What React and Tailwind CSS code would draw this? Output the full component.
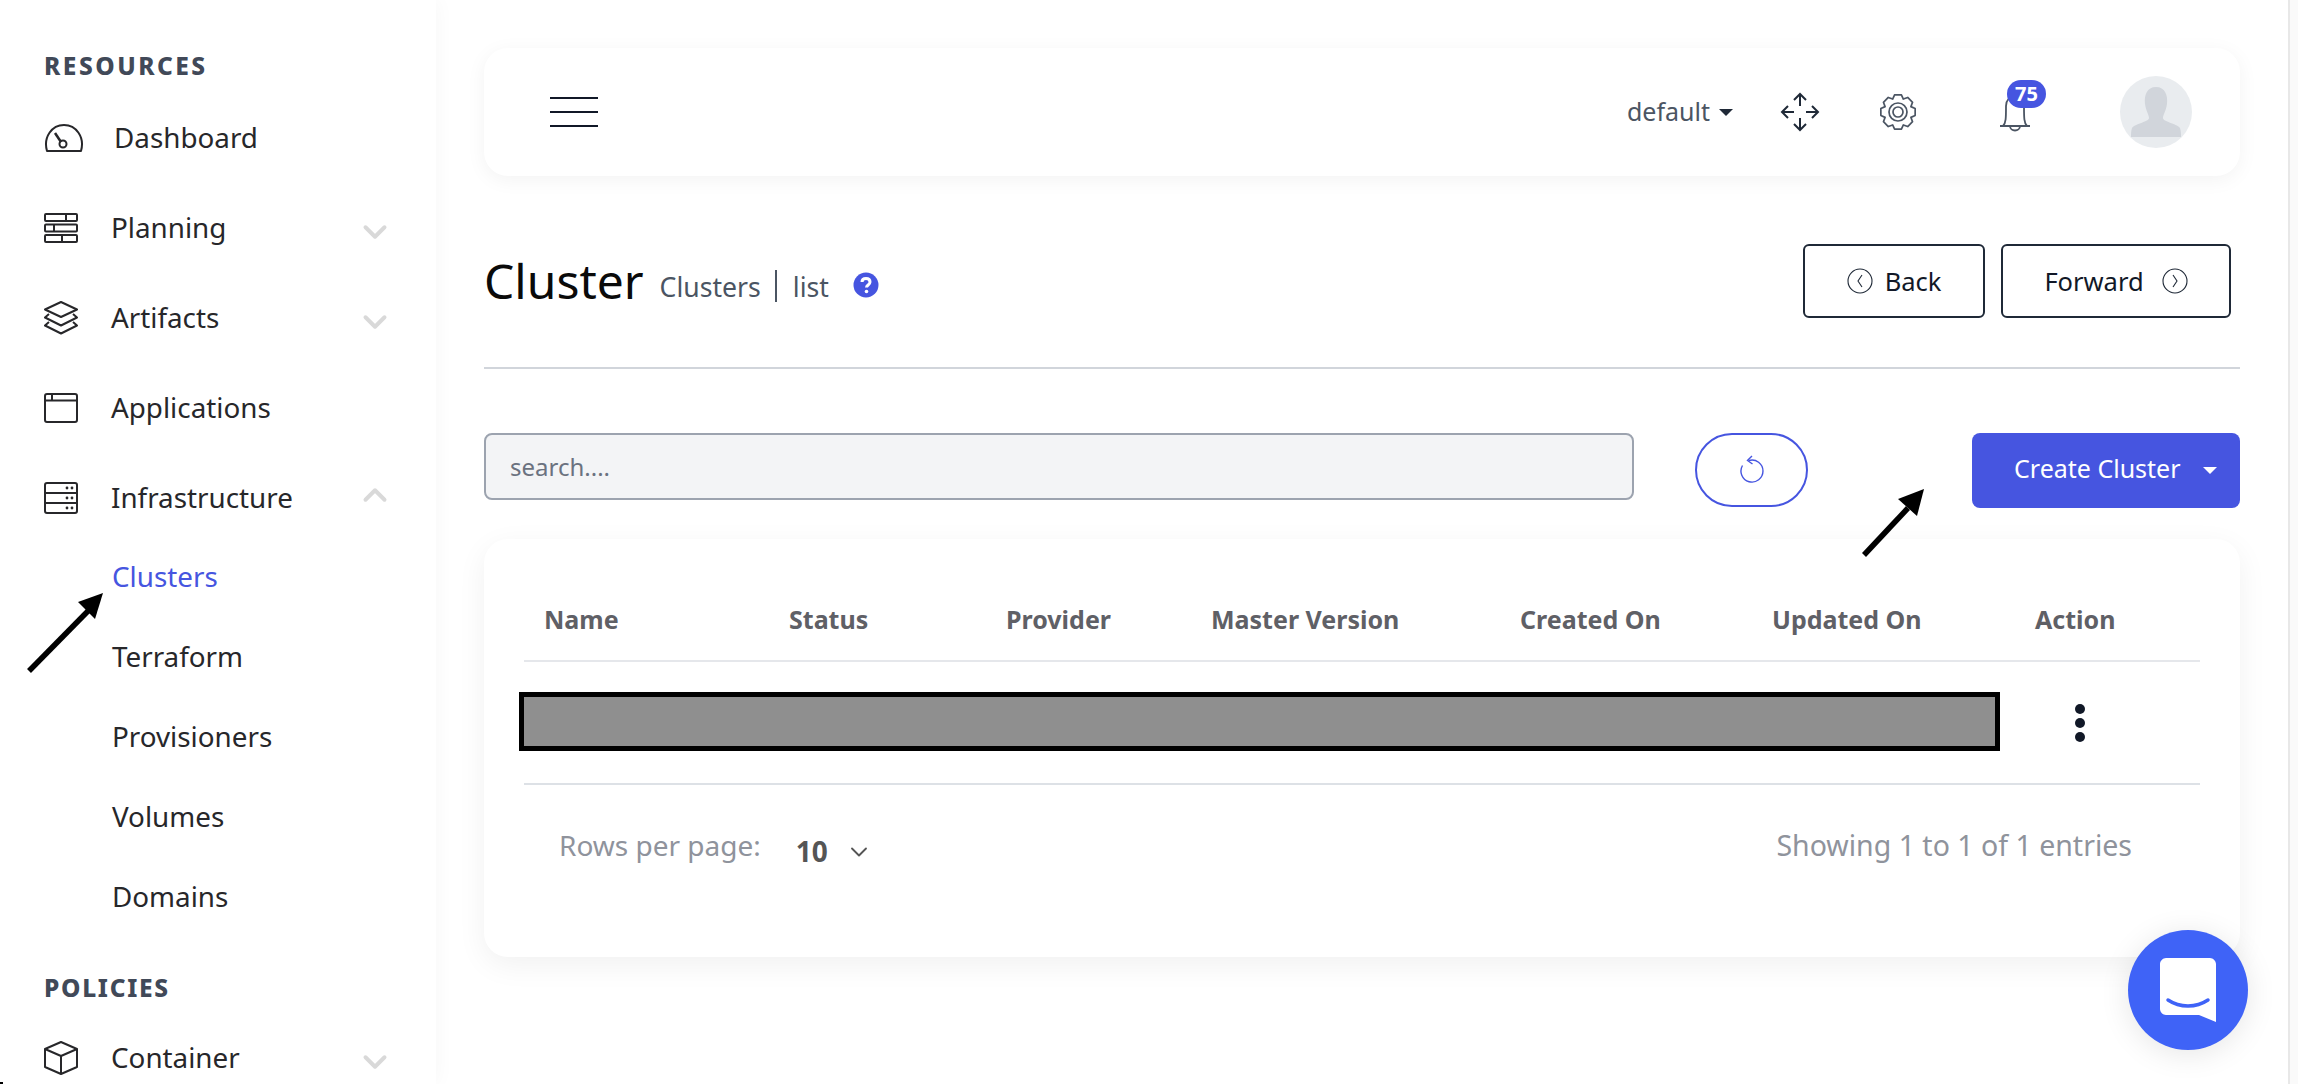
import { ChevronDown, ChevronUp } from "lucide-react";

const font = { fontFamily: '"Noto Sans", sans-serif' };

const Gauge = () => (
  <svg width="40" height="30" viewBox="0 0 40 30" fill="none" stroke="#27272a" strokeWidth="2">
    <path d="M3 28 C-1 14 8 2 20 2 C32 2 41 14 37 28 Z" strokeLinejoin="round" />
    <path d="M11 10 L17 19" strokeWidth="2.5" />
    <circle cx="19" cy="21" r="3.5" />
  </svg>
);

const Bricks = () => (
  <svg width="34" height="30" viewBox="0 0 34 30" fill="none" stroke="#27272a" strokeWidth="2">
    <rect x="1" y="1" width="32" height="7" rx="1" />
    <rect x="1" y="11.5" width="32" height="7" rx="1" />
    <rect x="1" y="22" width="32" height="7" rx="1" />
    <path d="M22 1V8M10 11.5V18.5M18 22V29" />
  </svg>
);

const Layers = () => (
  <svg width="34" height="34" viewBox="0 0 34 34" fill="none" stroke="#27272a" strokeWidth="2" strokeLinejoin="round">
    <path d="M17 1 L33 8.5 L17 16 L1 8.5 Z" />
    <path d="M5 13 L1 16.5 L17 24.5 L33 16.5 L29 13" />
    <path d="M5 21 L1 24.5 L17 32.5 L33 24.5 L29 21" />
  </svg>
);

const Browser = () => (
  <svg width="34" height="30" viewBox="0 0 34 30" fill="none" stroke="#27272a" strokeWidth="2">
    <rect x="1" y="1" width="32" height="28" rx="2" />
    <path d="M1 7.5H33M8 1V7.5" />
  </svg>
);

const Server = () => (
  <svg width="34" height="32" viewBox="0 0 34 32" fill="none" stroke="#27272a" strokeWidth="2">
    <rect x="1" y="1" width="32" height="30" rx="2" />
    <path d="M1 11H33M1 21H33" />
    <g fill="#27272a" stroke="none">
      <circle cx="23" cy="6" r="1.4" /><circle cx="28" cy="6" r="1.4" />
      <circle cx="23" cy="16" r="1.4" /><circle cx="28" cy="16" r="1.4" />
      <circle cx="23" cy="26" r="1.4" /><circle cx="28" cy="26" r="1.4" />
    </g>
  </svg>
);

const Box = () => (
  <svg width="34" height="34" viewBox="0 0 34 34" fill="none" stroke="#27272a" strokeWidth="2" strokeLinejoin="round">
    <path d="M17 1 L33 8 V26 L17 33 L1 26 V8 Z" />
    <path d="M1 8 L17 15 L33 8 M17 15 V33" />
  </svg>
);

// 8 teeth gear outline
const gearPath = () => {
  const pts = [];
  for (let i = 0; i < 8; i++) {
    const a = (i * Math.PI) / 4 - Math.PI / 2;
    const step = Math.PI / 8;
    [[14, -step], [17.5, -step * 0.5], [17.5, step * 0.5], [14, step]].forEach(([r, d]) => {
      pts.push(`${(18 + r * Math.cos(a + d)).toFixed(2)} ${(18 + r * Math.sin(a + d)).toFixed(2)}`);
    });
  }
  return `M${pts.join("L")}Z`;
};

const Gear = () => (
  <svg className="ml-[60px]" width="36" height="36" viewBox="0 0 36 36" fill="none" stroke="#4b5563" strokeWidth="1.7" strokeLinejoin="round">
    <path d={gearPath()} />
    <circle cx="18" cy="18" r="9" />
    <circle cx="18" cy="18" r="5" />
  </svg>
);

const Arrow = ({ className, width, height, x1, y1, x2, y2, head }) => (
  <svg className={className} width={width} height={height} viewBox={`0 0 ${width} ${height}`}>
    <line x1={x1} y1={y1} x2={x2} y2={y2} stroke="#000" strokeWidth="5.5" />
    <polygon points={head} fill="#000" />
  </svg>
);

const NavItem = ({ icon, label, chevron, indent }) => (
  <div className="flex h-[90px] items-center justify-between pr-[42px]">
    <div className="flex items-center">
      <div className="flex w-[67px] items-center">{icon}</div>
      <span className={`text-[27.8px] text-[#27272a] ${indent ? "ml-[3px]" : ""}`}>{label}</span>
    </div>
    {chevron === "down" && <ChevronDown size={38} strokeWidth={2.5} className="mt-[8px] text-[#d9d9d9]" />}
    {chevron === "up" && <ChevronUp size={38} strokeWidth={2.5} className="-mt-[6px] text-[#d9d9d9]" />}
  </div>
);

const SubItem = ({ label, active }) => (
  <div className={`flex h-[80px] items-center pl-[68px] text-[27.8px] ${active ? "text-[#4655e0]" : "text-[#27272a]"}`}>
    {label}
  </div>
);

const Sidebar = () => (
  <aside className="relative z-10 h-[1084px] w-[436px] shrink-0 overflow-hidden bg-white pl-[44px] pt-[54px] shadow-[0_0_20px_rgba(0,0,0,0.04)]">
    <div className="mb-[15px] text-[24.5px] leading-[24px] font-extrabold tracking-[2.5px] text-[#414958]">RESOURCES</div>
    <NavItem icon={<Gauge />} label="Dashboard" indent />
    <NavItem icon={<Bricks />} label="Planning" chevron="down" />
    <NavItem icon={<Layers />} label="Artifacts" chevron="down" />
    <NavItem icon={<Browser />} label="Applications" />
    <NavItem icon={<Server />} label="Infrastructure" chevron="up" />
    <div className="-mt-[6px]">
      <SubItem label="Clusters" active />
      <SubItem label="Terraform" />
      <SubItem label="Provisioners" />
      <SubItem label="Volumes" />
      <SubItem label="Domains" />
    </div>
    <div className="mb-[13px] mt-[39px] text-[24.5px] leading-[24px] font-extrabold tracking-[1.7px] text-[#414958]">POLICIES</div>
    <NavItem icon={<Box />} label="Container" chevron="down" />
  </aside>
);

const TopBar = () => (
  <div className="flex h-[128px] items-center justify-between rounded-[24px] bg-white pl-[66px] pr-[48px] shadow-[0_4px_20px_rgba(0,0,0,0.05)]">
    <div className="flex w-[48px] flex-col gap-[12px]">
      <div className="h-[2px] bg-[#111827]" />
      <div className="h-[2px] bg-[#111827]" />
      <div className="h-[2px] bg-[#111827]" />
    </div>
    <div className="flex items-center">
      <span className="text-[25px] text-[#4b5563]">default</span>
      <div className="ml-[9px] mr-[47px] h-0 w-0 border-x-[7px] border-t-[7px] border-x-transparent border-t-[#1f2937]" />
      <svg width="40" height="40" viewBox="0 0 40 40" fill="none" stroke="#1f2937" strokeWidth="2">
        <path d="M20 2V14M14 8L20 2L26 8M20 26V38M14 32L20 38L26 32M2 20H14M8 14L2 20L8 26M26 20H38M32 14L38 20L32 26" />
      </svg>
      <Gear />
      <div className="relative ml-[84px] h-[40px] w-[30px]">
        <svg width="30" height="40" viewBox="0 0 30 40" fill="none" stroke="#4b5563" strokeWidth="1.8" className="absolute left-0 top-0">
          <path d="M0 34H30M3 34C6 31 6 26 6 14C6 8 10 4 15 4C20 4 24 8 24 14C24 26 24 31 27 34" />
          <path d="M10 34C10 40 20 40 20 34" />
        </svg>
        <span className="absolute -top-[12px] left-[7px] flex h-[28px] w-[39px] items-center justify-center rounded-full bg-[#4655e0] text-[20px] font-bold text-white">75</span>
      </div>
      <div className="relative ml-[90px] h-[72px] w-[72px] overflow-hidden rounded-full bg-[#e9ecef]">
        <svg width="72" height="72" viewBox="0 0 72 72" fill="#d1d5db">
          <path d="M36 11C45 11 48 19 47 28C46 35 43 39 43 42C43 46 56 47 60 52C61 55 61 58 61 61H11C11 58 11 55 12 52C16 47 29 46 29 42C29 39 26 35 25 28C24 19 27 11 36 11Z" />
        </svg>
      </div>
    </div>
  </div>
);

const TitleRow = () => (
  <div className="mt-[68px] flex h-[74px] items-center justify-between pr-[9px]">
    <div className="flex items-center">
      <h1 className="text-[48px] leading-none text-[#0a0a0a]">Cluster</h1>
      <span className="ml-[16px] mt-[13px] text-[26.6px] leading-none text-[#4b5563]">Clusters</span>
      <div className="ml-[14px] mt-[10px] h-[32px] w-[2px] bg-[#4b5563]" />
      <span className="ml-[16px] mt-[13px] text-[26.6px] leading-none text-[#4b5563]">list</span>
      <svg className="ml-[24px] mt-[7px]" width="26" height="26" viewBox="0 0 26 26">
        <circle cx="13" cy="13" r="12.5" fill="#4655e0" />
        <path d="M9 10C9 7.5 11 6.5 13 6.5C15.5 6.5 17 8 17 10C17 13 13.5 13 13.5 15.5" fill="none" stroke="#fff" strokeWidth="3" />
        <circle cx="13.5" cy="19.5" r="1.8" fill="#fff" />
      </svg>
    </div>
    <div className="flex gap-[16px]">
      <button className="flex h-[74px] w-[182px] items-center justify-center gap-[12px] rounded-[6px] border-2 border-[#1f2937] text-[25.5px] text-[#111827]">
        <svg width="26" height="26" viewBox="0 0 26 26" fill="none" stroke="#1f2937" strokeWidth="1.1">
          <circle cx="13" cy="13" r="12" /><path d="M15 7L11 13L15 19" />
        </svg>
        Back
      </button>
      <button className="flex h-[74px] w-[230px] items-center justify-center gap-[18px] rounded-[6px] border-2 border-[#1f2937] text-[25.5px] text-[#111827]">
        Forward
        <svg width="26" height="26" viewBox="0 0 26 26" fill="none" stroke="#1f2937" strokeWidth="1.1">
          <circle cx="13" cy="13" r="12" /><path d="M11 7L15 13L11 19" />
        </svg>
      </button>
    </div>
  </div>
);

const SearchRow = () => (
  <div className="mt-[64px] flex items-start">
    <div className="flex h-[67px] w-[1150px] items-center rounded-[8px] border-2 border-[#9ca3af] bg-[#f3f4f6] pl-[24px] text-[24px] text-[#6b7280]">
      search....
    </div>
    <button className="ml-[61px] flex h-[74px] w-[113px] items-center justify-center rounded-[37px] border-2 border-[#4655e0]">
      <svg width="26" height="30" viewBox="0 0 26 30" fill="none" stroke="#4655e0" strokeWidth="1.4">
        <path d="M10 5.5A11 11 0 1 1 3.5 10.5" />
        <path d="M13 1L8.5 5.5L13.5 9" />
      </svg>
    </button>
    <button className="ml-auto flex h-[75px] w-[268px] items-center rounded-[8px] bg-[#4655e0] pb-[3px] pl-[42px] text-[25px] text-white">
      Create Cluster
      <span className="ml-[22px] mt-[3px] h-0 w-0 border-x-[7px] border-t-[7px] border-x-transparent border-t-white" />
    </button>
  </div>
);

const columns = [
  ["Name", "w-[245px]"],
  ["Status", "w-[217px]"],
  ["Provider", "w-[205px]"],
  ["Master Version", "w-[309px]"],
  ["Created On", "w-[252px]"],
  ["Updated On", "w-[263px]"],
  ["Action", "flex-1"],
];

const Table = () => (
  <div className="mt-[31px] h-[418px] rounded-[24px] bg-white px-[40px] shadow-[0_8px_30px_rgba(0,0,0,0.06)]">
    <div className="flex h-[123px] items-end border-b-2 border-[#e5e7eb] pb-[22px] pl-[20px] text-[25px] font-bold text-[#5f6066]">
      {columns.map(([name, width]) => (
        <div key={name} className={width}>{name}</div>
      ))}
    </div>
    <div className="flex h-[123px] items-center border-b-2 border-[#dde1e6]">
      <div className="-ml-[5px] mb-[2px] h-[59px] w-[1481px] flex-none border-[5px] border-black bg-[#8f8f8f]" />
      <div className="ml-[75px] flex flex-col gap-[4px]">
        <div className="h-[10px] w-[10px] rounded-full bg-[#111827]" />
        <div className="h-[10px] w-[10px] rounded-full bg-[#111827]" />
        <div className="h-[10px] w-[10px] rounded-full bg-[#111827]" />
      </div>
    </div>
    <div className="flex items-start justify-between pl-[35px] pr-[68px] pt-[42px]">
      <div className="flex items-start">
        <span className="text-[28px] leading-[36px] text-[#8f939c]">Rows per page:</span>
        <span className="ml-[35px] mt-[6px] text-[28px] leading-[36px] font-bold text-[#555]">10</span>
        <ChevronDown size={28} strokeWidth={1.6} className="ml-[17px] mt-[11px] text-[#555]" />
      </div>
      <span className="text-[28.5px] leading-[36px] text-[#8f939c]">Showing 1 to 1 of 1 entries</span>
    </div>
  </div>
);

const App = () => (
  <div className="relative flex h-[1084px] w-[2298px] overflow-hidden bg-white" style={font}>
    <Sidebar />
    <main className="h-full flex-1 bg-white pl-[48px] pr-[48px] pt-[48px]">
      <TopBar />
      <TitleRow />
      <div className="mt-[49px] h-[2px] bg-[#d1d5db]" />
      <SearchRow />
      <Table />
    </main>
    {/* scrollbar track */}
    <div className="h-full w-[10px] shrink-0 border-l-2 border-[#e8e8e8] bg-[#fafafa]" />

    {/* annotation arrows */}
    <Arrow className="absolute left-[25px] top-[585px] z-20" width={85} height={90} x1={4} y1={86} x2={65} y2={24} head="78,8 53,17 70,34" />
    <Arrow className="absolute left-[1858px] top-[484px] z-20" width={72} height={76} x1={6} y1={71} x2={50} y2={24} head="66,5 40,15 59,32" />
    <div className="absolute left-0 top-[1082px] z-20 h-[2px] w-[3px] bg-black" />

    {/* chat launcher */}
    <div className="absolute left-[2128px] top-[930px] z-30 flex h-[120px] w-[120px] items-center justify-center rounded-full bg-[#3f63f7] shadow-[0_4px_30px_rgba(0,0,0,0.1)]">
      <svg width="56" height="64" viewBox="0 0 56 64">
        <path d="M6 0H50C53 0 56 3 56 6V64L39 57H6C3 57 0 54 0 51V6C0 3 3 0 6 0Z" fill="#fff" />
        <path d="M8 42C20 50 36 50 48 42" fill="none" stroke="#3f63f7" strokeWidth="3.5" strokeLinecap="round" />
      </svg>
    </div>
  </div>
);

export default App;
